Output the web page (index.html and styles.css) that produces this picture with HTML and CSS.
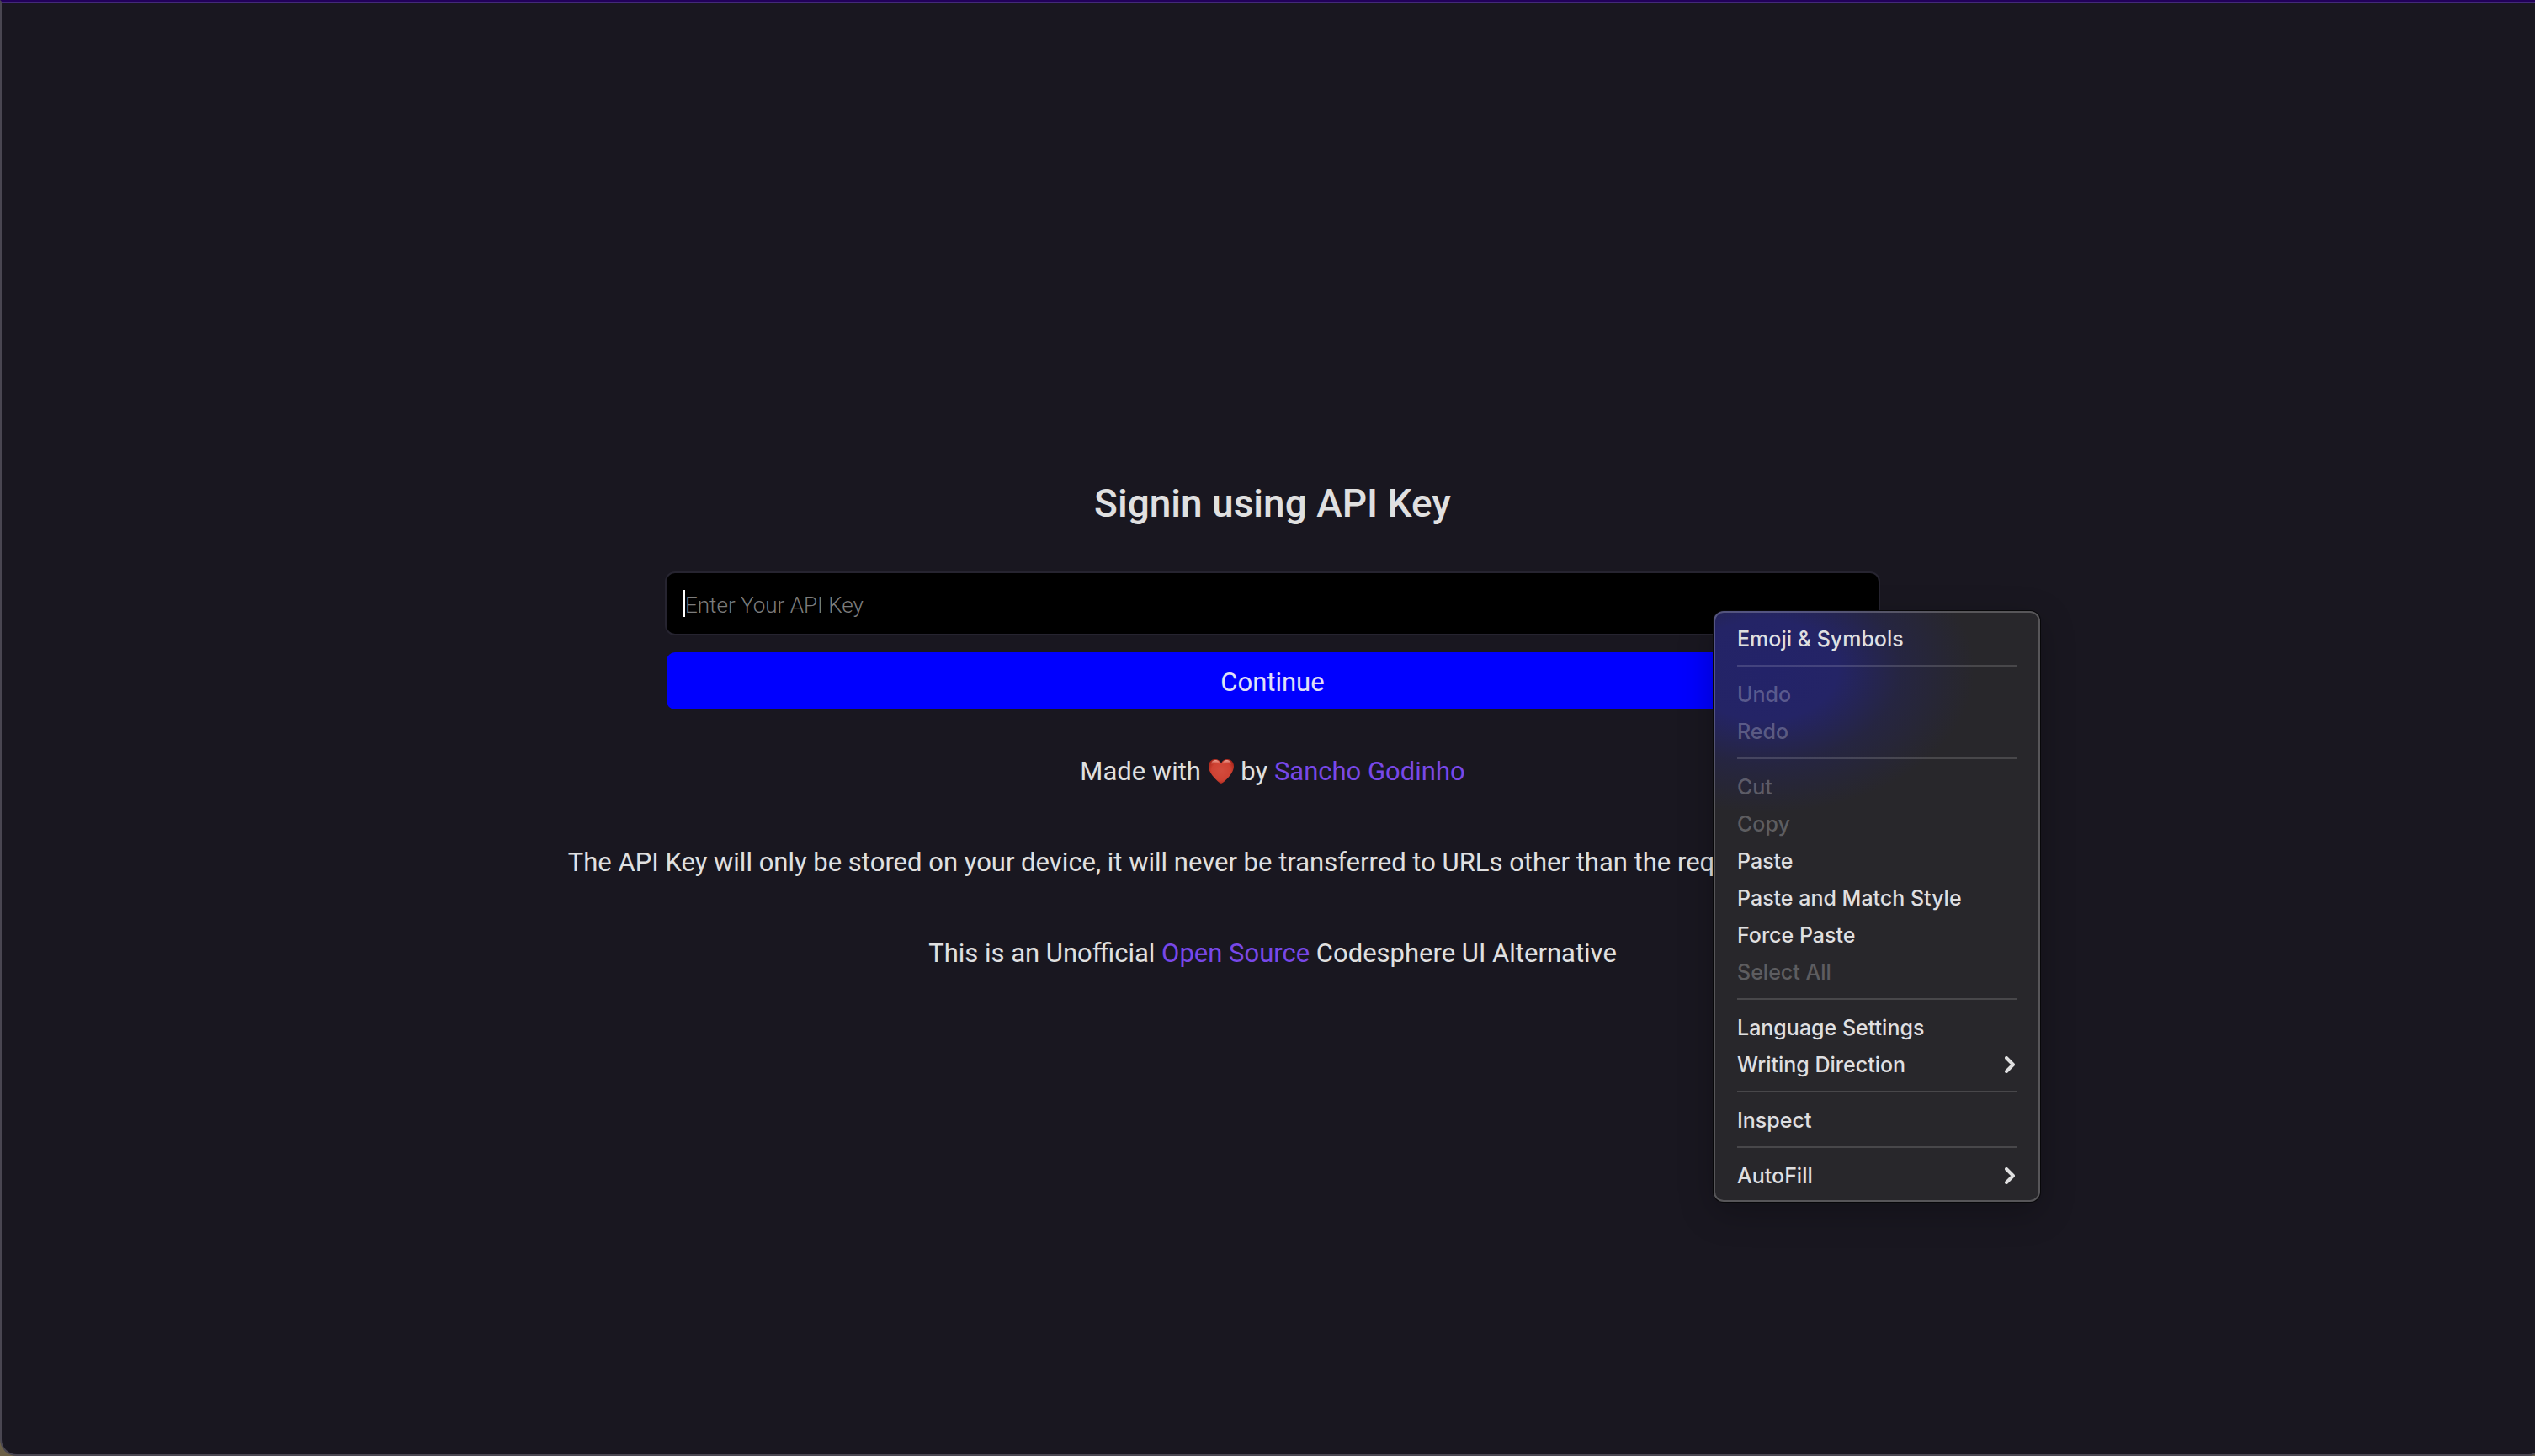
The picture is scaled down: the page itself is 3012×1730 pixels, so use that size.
FILE: index.html
```html
<!DOCTYPE html>
<html lang="en">
<head>
<meta charset="utf-8">
<meta name="viewport" content="width=device-width, initial-scale=1">
<title>Signin using API Key</title>
<link rel="stylesheet" href="styles.css">
</head>
<body>
<div class="window">
  <main class="signin">
    <h1 class="title">Signin using API Key</h1>
    <form class="form">
      <div class="field">
        <input class="key-input" type="text" placeholder="Enter Your API Key" aria-label="API Key">
        <span class="caret"></span>
      </div>
      <button class="continue" type="button">Continue</button>
      <div class="menu" role="menu">
        <button class="item" type="button" role="menuitem">Emoji &amp; Symbols</button>
        <hr class="separator">
        <button class="item" type="button" role="menuitem" disabled>Undo</button>
        <button class="item" type="button" role="menuitem" disabled>Redo</button>
        <hr class="separator">
        <button class="item" type="button" role="menuitem" disabled>Cut</button>
        <button class="item" type="button" role="menuitem" disabled>Copy</button>
        <button class="item" type="button" role="menuitem">Paste</button>
        <button class="item" type="button" role="menuitem">Paste and Match Style</button>
        <button class="item" type="button" role="menuitem">Force Paste</button>
        <button class="item" type="button" role="menuitem" disabled>Select All</button>
        <hr class="separator">
        <button class="item" type="button" role="menuitem">Language Settings</button>
        <button class="item" type="button" role="menuitem">Writing Direction
          <svg class="chevron" viewBox="0 0 12 20" aria-hidden="true"><path d="M2 2l8 8-8 8"/></svg>
        </button>
        <hr class="separator">
        <button class="item" type="button" role="menuitem">Inspect</button>
        <hr class="separator">
        <button class="item" type="button" role="menuitem">AutoFill
          <svg class="chevron" viewBox="0 0 12 20" aria-hidden="true"><path d="M2 2l8 8-8 8"/></svg>
        </button>
      </div>
    </form>
    <div class="notes">
      <p class="note">Made with
        <svg class="heart" viewBox="0 0 32 30" role="img" aria-label="love">
          <defs>
            <radialGradient id="heart-fill" cx="50%" cy="48%" r="58%">
              <stop offset="0" stop-color="#d44c3d"/>
              <stop offset=".65" stop-color="#cf4233"/>
              <stop offset="1" stop-color="#a52318"/>
            </radialGradient>
            <linearGradient id="heart-shine" x1="0" y1="0" x2="0" y2="1">
              <stop offset="0" stop-color="#ffd0c4" stop-opacity=".8"/>
              <stop offset="1" stop-color="#e66a58" stop-opacity="0"/>
            </linearGradient>
          </defs>
          <path fill="url(#heart-fill)" d="M16 30C14.500 30 1 19 1 9.500 1 4.200 4.500 1 8.800 1 12 1 14.700 2.800 16 6c1.300-3.200 4-5 7.200-5C27.500 1 31 4.200 31 9.500 31 19 17.500 30 16 30z"/>
          <path fill="url(#heart-shine)" d="M3.500 8C4 4 6.200 2 9 2s5.200 1.700 5.800 5C11 5.500 7 5.500 3.500 8zM28.500 8C28 4 25.800 2 23 2s-5.200 1.700-5.800 5c3.800-1.500 7.800-1.500 11.300 1z"/>
        </svg>
        by <a class="link" href="#author">Sancho Godinho</a></p>
      <p class="note note-storage">The API Key will only be stored on your device, it will never be transferred to URLs other than the req</p>
      <p class="note">This is an Unofficial <a class="link" href="#source">Open Source</a> Codesphere UI Alternative</p>
    </div>
  </main>
</div>
</body>
</html>
```
FILE: styles.css
```css
* {
  box-sizing: border-box;
}

body {
  margin: 0;
  overflow: hidden;
  background: #6b6047;
  color: #e0e0e0;
  font-family: Roboto, "Liberation Sans", sans-serif;
  font-size: 31px;
  font-weight: 400;
  line-height: 40px;
}

/* The window runs slightly past the right edge of the screen. */
.window {
  display: flex;
  width: calc(100% + 12px);
  min-height: 100vh;
  border: 2px solid #494651;
  border-top-color: #210059;
  border-radius: 0 0 20px 20px;
  background: #191720;
}

.signin {
  flex: 1;
  display: flex;
  flex-direction: column;
  align-items: center;
  justify-content: center;
  padding-bottom: 10px;
  border-top: 2px solid #432a78;
}

.title {
  margin: 0 0 52px;
  font-size: 46px;
  font-weight: 500;
  line-height: 58px;
}

.form {
  position: relative;
  display: flex;
  flex-direction: column;
  align-items: stretch;
  gap: 20px;
  width: 48%;
  max-width: 1444px;
}

.field {
  position: relative;
  display: flex;
}

.key-input {
  flex: 1;
  height: 76px;
  padding: 4px 22px 0;
  border: 2px solid #262430;
  border-radius: 12px;
  outline: none;
  background: #000;
  color: #e0e0e0;
  font: inherit;
  font-size: 26px;
  font-weight: 300;
}

.key-input::placeholder {
  color: #7c7c7c;
  opacity: 1;
}

.caret {
  position: absolute;
  top: 22px;
  left: 22px;
  width: 2px;
  height: 32px;
  background: #fff;
}

.continue {
  height: 68px;
  margin: 0 2px;
  padding: 4px 0 0;
  border: 0;
  border-radius: 10px;
  background: #00f;
  color: #e0e0f6;
  font: inherit;
}

.notes {
  display: flex;
  flex-direction: column;
  align-items: center;
  gap: 68px;
  margin-top: 54px;
}

.note {
  margin: 0;
  white-space: nowrap;
}

/* Room kept for the end of the line, which lies under the menu. */
.note-storage {
  padding-right: 312px;
}

.link {
  color: #7848e8;
  text-decoration: none;
}

.heart {
  width: 32px;
  height: 30px;
  vertical-align: -4px;
}

.menu {
  position: absolute;
  top: 47px;
  right: -190px;
  z-index: 1;
  display: flex;
  flex-direction: column;
  width: 388px;
  padding: 8px 26px;
  border: 2px solid rgba(255, 255, 255, 0.22);
  border-radius: 12px;
  background:
    radial-gradient(ellipse 250px 170px at 60px 70px, #232369 0, #242466 35%, rgba(36, 36, 80, 0.6) 65%, rgba(40, 39, 43, 0) 100%) border-box,
    #28272b border-box;
  box-shadow: 0 0 0 1px #08080a, 0 12px 40px rgba(0, 0, 0, 0.25);
}

.item {
  display: flex;
  align-items: center;
  justify-content: space-between;
  height: 44px;
  padding: 2px 0 0;
  border: 0;
  background: none;
  color: #dfdfe0;
  font-family: Inter, "Liberation Sans", sans-serif;
  font-size: 25px;
  font-weight: 500;
  line-height: 32px;
  text-align: left;
}

.item:disabled {
  color: rgba(255, 255, 255, 0.26);
}

.separator {
  width: 100%;
  height: 2px;
  margin: 10px 0;
  border: 0;
  background: rgba(255, 255, 255, 0.15);
}

.chevron {
  width: 12px;
  height: 20px;
  margin-right: 2px;
  fill: none;
  stroke: #dfdfe0;
  stroke-width: 4;
  stroke-linecap: round;
  stroke-linejoin: round;
}
```
